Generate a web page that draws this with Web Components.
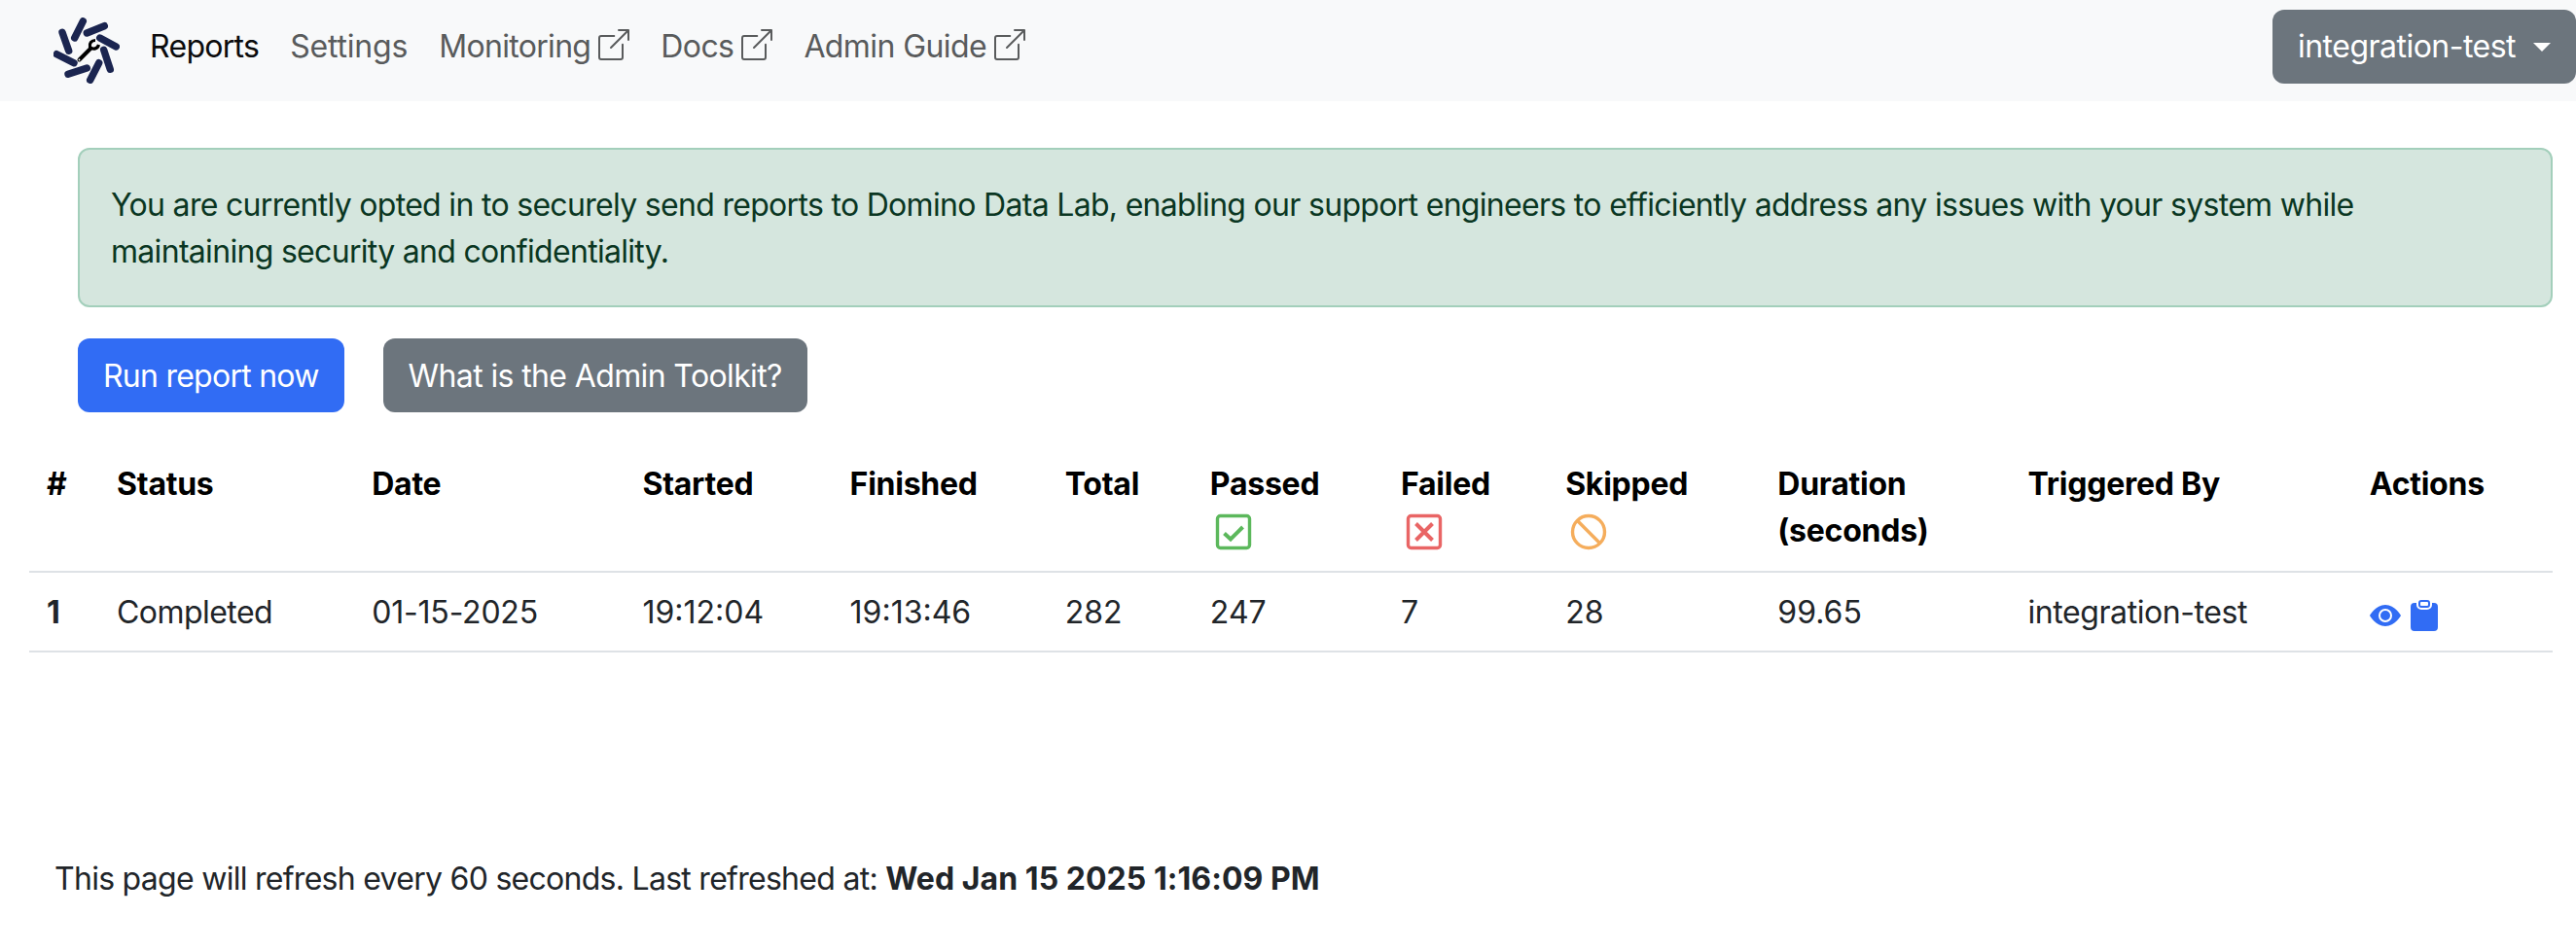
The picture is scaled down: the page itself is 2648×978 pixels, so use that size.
<!DOCTYPE html>
<html lang="en">
<head>
<meta charset="utf-8">
<title>Reports</title>
<style>
  html, body { margin: 0; background: #fff; }
  body { font: 400 32px/48px Inter, "Liberation Sans", sans-serif; color: #212529; letter-spacing: -.75px; }
  b { letter-spacing: .05px; }
</style>
</head>
<body>
<app-navbar>
  <nav-link active style="letter-spacing:-.7px">Reports</nav-link>
  <nav-link style="letter-spacing:-.2px">Settings</nav-link>
  <nav-link external style="letter-spacing:-.68px">Monitoring</nav-link>
  <nav-link external style="letter-spacing:-.6px">Docs</nav-link>
  <nav-link external style="letter-spacing:-.6px">Admin Guide</nav-link>
  <user-menu slot="end" style="letter-spacing:-.52px">integration-test</user-menu>
</app-navbar>
<main-section>
  <app-alert style="letter-spacing:-.69px">You are currently opted in to securely send reports to Domino Data Lab, enabling our support engineers to efficiently address any issues with your system while maintaining security and confidentiality.</app-alert>
  <button-row>
    <app-button variant="primary">Run report now</app-button>
    <app-button variant="secondary" style="letter-spacing:-.62px">What is the Admin Toolkit?</app-button>
  </button-row>
</main-section>
<report-table></report-table>
<refresh-note style="letter-spacing:-.72px">This page will refresh every 60 seconds. Last refreshed at: <b>Wed Jan 15 2025 1:16:09 PM</b></refresh-note>

<script>
const ICONS = {
  external: '<svg width="32" height="32" viewBox="0 0 16 16" fill="currentColor"><path fill-rule="evenodd" d="M8.636 3.5a.5.5 0 0 0-.5-.5H1.5A1.5 1.5 0 0 0 0 4.5v10A1.5 1.5 0 0 0 1.5 16h10a1.5 1.5 0 0 0 1.5-1.5V7.864a.5.5 0 0 0-1 0V14.5a.5.5 0 0 1-.5.5h-10a.5.5 0 0 1-.5-.5v-10a.5.5 0 0 1 .5-.5h6.636a.5.5 0 0 0 .5-.5z"/><path fill-rule="evenodd" d="M16 .5a.5.5 0 0 0-.5-.5h-5a.5.5 0 0 0 0 1h3.793L6.146 9.146a.5.5 0 1 0 .708.708L15 1.707V5.5a.5.5 0 0 0 1 0v-5z"/></svg>',
  eye: '<svg width="32" height="32" viewBox="0 0 16 16" fill="#316cf4"><path d="M10.5 8a2.5 2.5 0 1 1-5 0 2.5 2.5 0 0 1 5 0z"/><path d="M0 8s3-5.5 8-5.5S16 8 16 8s-3 5.5-8 5.5S0 8 0 8zm8 3.5a3.5 3.5 0 1 0 0-7 3.5 3.5 0 0 0 0 7z"/></svg>',
  clipboard: '<svg width="32" height="32" viewBox="0 0 16 16" fill="#316cf4"><path fill-rule="evenodd" d="M10 1.5a.5.5 0 0 0-.5-.5h-3a.5.5 0 0 0-.5.5v1a.5.5 0 0 0 .5.5h3a.5.5 0 0 0 .5-.5v-1Zm-5 0A1.5 1.5 0 0 1 6.5 0h3A1.5 1.5 0 0 1 11 1.5v1A1.5 1.5 0 0 1 9.5 4h-3A1.5 1.5 0 0 1 5 2.5v-1Zm-2 0h1v1A2.5 2.5 0 0 0 6.5 5h3A2.5 2.5 0 0 0 12 2.5v-1h1a2 2 0 0 1 2 2V14a2 2 0 0 1-2 2H3a2 2 0 0 1-2-2V3.5a2 2 0 0 1 2-2Z"/></svg>',
  passed: '<svg width="40" height="40" viewBox="0 0 40 40" fill="none" stroke="#5cb85c"><rect x="3.500" y="3.500" width="33" height="33" rx="3" stroke-width="3.4"/><path d="M10.500 21.500l6.500 6 12.500-12.500" stroke-width="4"/></svg>',
  failed: '<svg width="40" height="40" viewBox="0 0 40 40" fill="none" stroke="#e96565"><rect x="3.500" y="3.500" width="33" height="33" rx="3" stroke-width="3.4"/><path d="M11.500 11.500l17 17M28.500 11.500l-17 17" stroke-width="4"/></svg>',
  skipped: '<svg width="40" height="40" viewBox="0 0 40 40" fill="none" stroke="#f5ad5c" stroke-width="3.400"><circle cx="20" cy="20" r="16.500"/><path d="M8.300 8.300l23.400 23.400"/></svg>',
  logo: '<svg width="68" height="68" viewBox="55 14 68 68" fill="none"><g stroke="#1b2550" stroke-width="7.400" stroke-linecap="round"><path d="M85.300 17.800L76.700 35"/><path d="M107.300 22.700L89.300 30"/><path d="M119.300 44L102.700 35"/><path d="M113.300 67.300L106.700 47.300"/><path d="M92.700 78.300L101.700 60.700"/><path d="M70 72.300L89.300 66"/><path d="M58.300 51.700L76 60.700"/><path d="M64 29.300L70.700 48.300"/></g><path d="M81.500 57.500L93 46" stroke="#000" stroke-width="4" stroke-linecap="round"/><path d="M98 37.500C94 37.500 91.500 40.500 92.500 44.500 96 47.500 100.500 46 101.500 42" stroke="#000" stroke-width="3.200"/><circle cx="81.500" cy="57.500" r=".9" fill="#f8f9fa"/></svg>'
};

function define(name, css, html) {
  customElements.define(name, class extends HTMLElement {
    connectedCallback() {
      if (this.shadowRoot) return;
      this.attachShadow({ mode: 'open' });
      this.shadowRoot.innerHTML = '<style>' + css + '</style>' + (typeof html === 'function' ? html(this) : html);
    }
  });
}

define('app-navbar', `
  :host { display: flex; align-items: flex-start; justify-content: space-between; height: 104px; background: #f8f9fa; }
  .start { display: flex; align-items: center; height: 96px; }
  .logo { display: flex; margin-left: 55px; margin-right: 15px; margin-top: 8px; }
`, `
  <div class="start"><span class="logo">${ICONS.logo}</span><slot></slot></div>
  <slot name="end"></slot>
`);

define('nav-link', `
  :host { display: inline-flex; align-items: center; gap: 8px; padding: 0 16px; color: #595b5c; white-space: nowrap; }
  :host([active]) { color: #0b0b0c; }
  svg { display: block; margin-top: -4px; }
`, el => '<slot></slot>' + (el.hasAttribute('external') ? ICONS.external : ''));

define('user-menu', `
  :host { display: flex; align-items: center; box-sizing: border-box; height: 76px; margin-top: 10px; padding: 0 26px; background: #6c757d; color: #fff; border-radius: 12px; }
  .caret { display: block; width: 0; height: 0; margin-left: 18px; border-top: 9.6px solid #fff; border-left: 9.6px solid transparent; border-right: 9.6px solid transparent; }
`, '<slot></slot><span class="caret"></span>');

define('main-section', `
  :host { display: block; padding: 48px 24px 0 80px; }
`, '<slot></slot>');

define('app-alert', `
  :host { display: block; box-sizing: border-box; padding: 33px 132px 31px 32px; border: 2px solid #a3cfbb; border-radius: 12px; background: #d5e6de; color: #0a3622; margin-bottom: 32px; }
`, '<slot></slot>');

define('button-row', `
  :host { display: flex; gap: 40px; }
`, '<slot></slot>');

define('app-button', `
  :host { display: block; box-sizing: border-box; padding: 15px 26px 13px; border-radius: 12px; color: #fff; white-space: nowrap; }
  :host([variant=primary]) { background: #316cf4; }
  :host([variant=secondary]) { background: #6c757d; }
`, '<slot></slot>');

const COLS = [74, 262, 278, 213, 221, 149, 196, 169, 218, 257, 351, 204];
const HEAD = [
  ['#'], ['Status'], ['Date'], ['Started'], ['Finished'], ['Total'],
  ['Passed', ICONS.passed], ['Failed', ICONS.failed], ['Skipped', ICONS.skipped],
  ['Duration (seconds)'], ['Triggered By'], ['Actions']
];
const ROW = [['1', 0], ['Completed', -.55], ['01-15-2025', -.2], ['19:12:04', 0], ['19:13:46', 0], ['282', 0], ['247', 0], ['7', 0], ['28', 0], ['99.65', 0], ['integration-test', -.42]];

define('report-table', `
  :host { display: block; padding: 35px 24px 0 30px; }
  table { width: 100%; table-layout: fixed; border-collapse: collapse; color: #000; letter-spacing: 0; }
  th, td { text-align: left; vertical-align: top; border-bottom: 2px solid #dee2e6; }
  th { padding: 15px 16px 17px; font-weight: 700; letter-spacing: -.25px; }
  td { padding: 17px 16px 15px; color: #212529; }
  th:first-child, td:first-child { padding-left: 18px; }
  td:first-child { font-weight: 700; }
  .ico { display: block; box-sizing: border-box; height: 48px; padding-top: 5px; margin-left: 4px; }
  .ico svg { display: block; }
  .acts { display: flex; align-items: center; gap: 8px; height: 48px; }
  .acts svg { display: block; margin-top: 6px; }
`, () => `
  <table>
    <colgroup>${COLS.map(w => `<col style="width:${w}px">`).join('')}</colgroup>
    <thead><tr>${HEAD.map(h => `<th>${h[0]}${h[1] ? `<span class="ico">${h[1]}</span>` : ''}</th>`).join('')}</tr></thead>
    <tbody><tr>${ROW.map(c => `<td style="letter-spacing:${c[1]}px">${c[0]}</td>`).join('')}<td><div class="acts">${ICONS.eye}${ICONS.clipboard}</div></td></tr></tbody>
  </table>
`);

define('refresh-note', `
  :host { display: block; padding: 209px 0 0 56px; color: #212529; }
`, '<slot></slot>');
</script>
</body>
</html>
